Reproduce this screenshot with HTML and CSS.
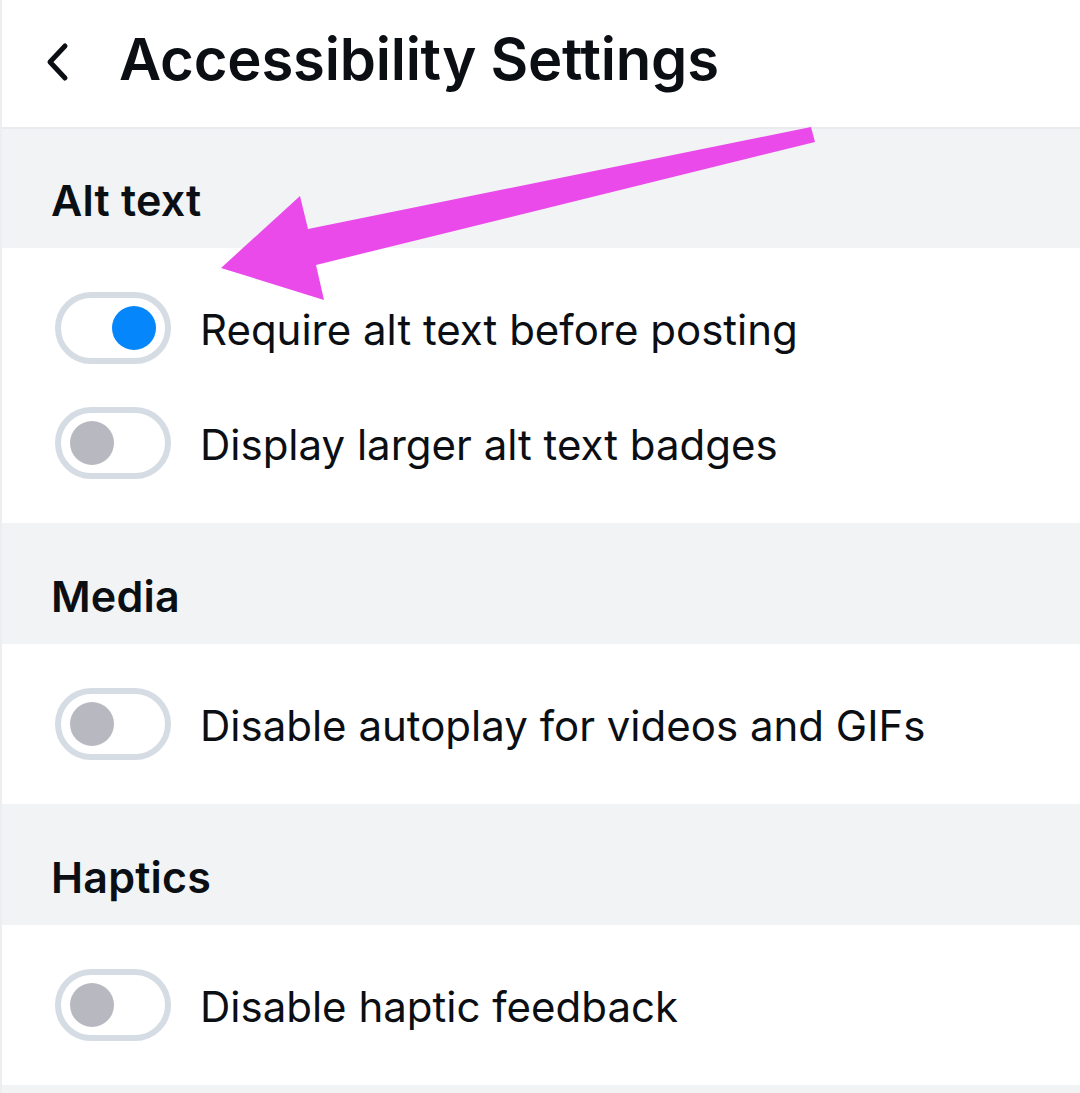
FILE: index.html
```html
<!DOCTYPE html>
<html lang="en">
<head>
<meta charset="utf-8">
<title>Accessibility Settings</title>
<link rel="stylesheet" href="styles.css">
</head>
<body>
<div class="screen">
  <header class="topbar">
    <button class="back" aria-label="Back">
      <svg width="26" height="40" viewBox="0 0 26 40"><path d="M20 4 L5 20 L20 36" fill="none" stroke="#0b0f14" stroke-width="5" stroke-linecap="round" stroke-linejoin="round"/></svg>
    </button>
    <h1 class="title">Accessibility Settings</h1>
  </header>

  <section class="group">
    <h2 class="group-head first">Alt text</h2>
    <div class="group-body">
      <label class="row"><span class="toggle on"><span class="knob"></span></span><span class="label">Require alt text before posting</span></label>
      <label class="row"><span class="toggle"><span class="knob"></span></span><span class="label">Display larger alt text badges</span></label>
    </div>
  </section>

  <section class="group">
    <h2 class="group-head">Media</h2>
    <div class="group-body">
      <label class="row"><span class="toggle"><span class="knob"></span></span><span class="label">Disable autoplay for videos and GIFs</span></label>
    </div>
  </section>

  <section class="group">
    <h2 class="group-head">Haptics</h2>
    <div class="group-body">
      <label class="row"><span class="toggle"><span class="knob"></span></span><span class="label">Disable haptic feedback</span></label>
    </div>
  </section>
  <div class="tail"></div>

  <svg class="pointer" width="1080" height="1093" viewBox="0 0 1080 1093">
    <polygon fill="#ea4aea" points="811,127 815,142 316,265 324,300 221,268 300,196 308,229"/>
  </svg>
</div>
</body>
</html>
```

FILE: styles.css
```css
* { box-sizing: border-box; }
html, body { margin: 0; padding: 0; background: #fff; }
body {
  font-family: Inter, "Noto Sans", "Liberation Sans", sans-serif;
  color: #0b0f14;
}
.screen {
  position: relative;
  width: 1080px;
  height: 1093px;
  overflow: hidden;
  border-left: 2px solid #eceef1;
}
.topbar {
  height: 129px;
  display: flex;
  align-items: center;
  border-bottom: 2px solid #e9ebee;
  padding-left: 43px;
}
.back {
  background: none;
  border: 0;
  padding: 0;
  width: 26px;
  height: 40px;
  display: flex;
  margin-right: 48px;
  margin-top: -4px;
}
.title {
  margin: 0;
  font-size: 58px;
  font-weight: 600;
  letter-spacing: -0.2px;
  line-height: 1;
  margin-top: -10px;
}
.group-head {
  margin: 0;
  background: #f1f3f5;
  height: 121px;
  display: flex;
  align-items: center;
  padding: 24px 0 0 49px;
  font-size: 43px;
  font-weight: 600;
  letter-spacing: 0.2px;
}
.group-head.first { height: 119px; padding-top: 22px; }
.group-body {
  padding: 44px 0;
  display: flex;
  flex-direction: column;
  gap: 43px;
}
.row {
  display: flex;
  align-items: center;
  padding-left: 53px;
  height: 72px;
}
.toggle {
  width: 116px;
  height: 72px;
  border: 6px solid #d5dce3;
  border-radius: 36px;
  display: flex;
  align-items: center;
  padding: 0 9px;
  background: #fff;
  flex: none;
}
.toggle .knob {
  width: 44px;
  height: 44px;
  border-radius: 50%;
  background: #b8b8c0;
}
.toggle.on { justify-content: flex-end; }
.toggle.on .knob { background: #0686fb; }
.label {
  margin-left: 29px;
  font-size: 42px;
  font-weight: 400;
  margin-top: 2px;
}
.tail {
  background: #f1f3f5;
  height: 40px;
}
.pointer {
  position: absolute;
  left: -2px;
  top: 0;
  pointer-events: none;
}
```
